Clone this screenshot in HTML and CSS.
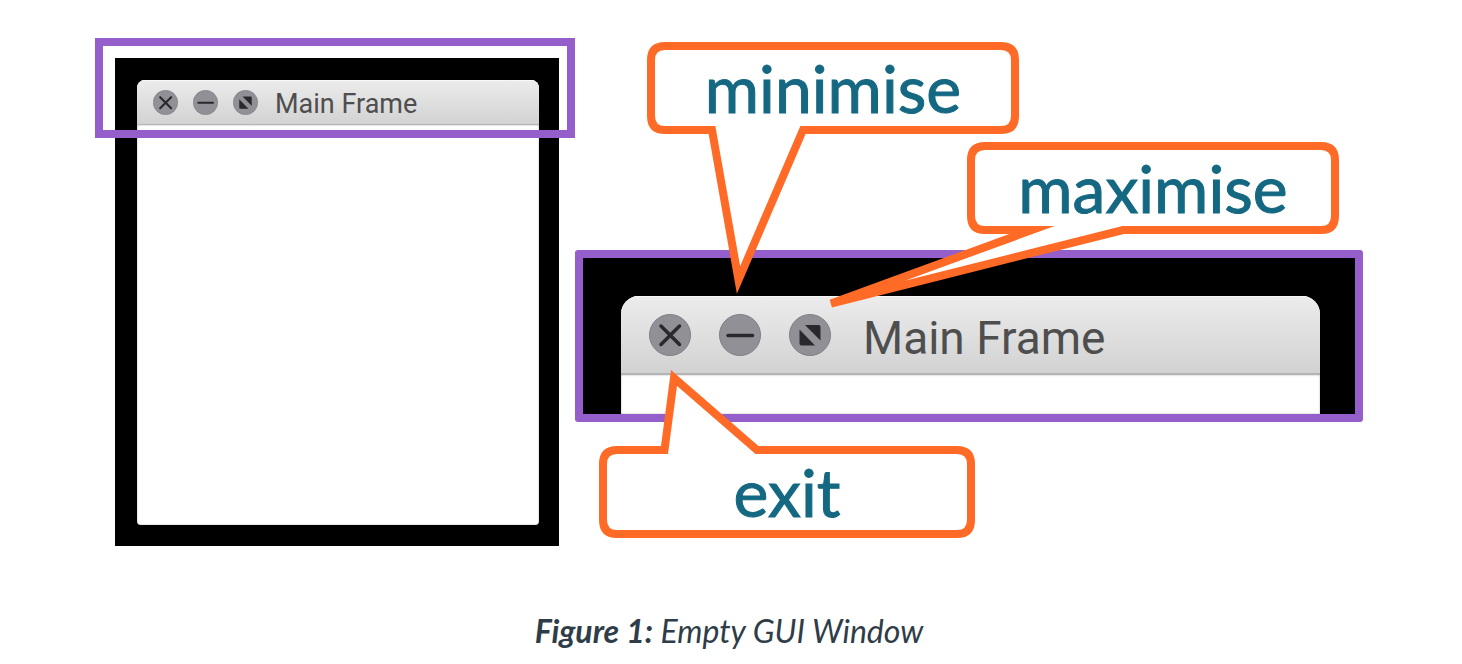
FILE: index.html
```html
<!DOCTYPE html>
<html lang="en">
<head>
<meta charset="utf-8">
<title>Empty GUI Window</title>
<link rel="stylesheet" href="styles.css">
</head>
<body>
<svg class="defs" aria-hidden="true">
  <symbol id="exit" viewBox="0 0 42 42"><circle cx="21" cy="21" r="20.5"/><path class="stroke" d="M12 12l18.500 18.500M30.500 12l-18.500 18.500"/></symbol>
  <symbol id="minimise" viewBox="0 0 42 42"><circle cx="21" cy="21" r="20.5"/><path class="stroke" d="M9 21.500h24.500"/></symbol>
  <symbol id="maximise" viewBox="0 0 42 42"><circle cx="21" cy="21" r="20.500"/><path class="solid" d="M16 11h13.500q2 0 2 2v13.500zM10.500 15.500L26 31.500H12.500q-2 0-2-2z"/></symbol>
</svg>
<figure class="figure">
  <div class="diagram">
    <section class="overview">
      <div class="desktop">
        <div class="window">
          <header class="titlebar">
            <button class="control" aria-label="Exit"><svg><use href="#exit"/></svg></button>
            <button class="control" aria-label="Minimise"><svg><use href="#minimise"/></svg></button>
            <button class="control" aria-label="Maximise"><svg><use href="#maximise"/></svg></button>
            <span class="title">Main Frame</span>
          </header>
          <div class="content"></div>
        </div>
      </div>
      <div class="highlight"></div>
    </section>
    <section class="detail">
      <div class="closeup">
        <div class="window large">
          <header class="titlebar">
            <button class="control" aria-label="Exit"><svg><use href="#exit"/></svg></button>
            <button class="control" aria-label="Minimise"><svg><use href="#minimise"/></svg></button>
            <button class="control" aria-label="Maximise"><svg><use href="#maximise"/></svg></button>
            <span class="title">Main Frame</span>
          </header>
          <div class="content"></div>
        </div>
      </div>
      <div class="callout callout-minimise">
        <svg class="bubble" aria-hidden="true"><path d="M18 4H354Q368 4 368 18V74Q368 88 354 88H156L91.500 238L65 88H18Q4 88 4 74V18Q4 4 18 4Z"/></svg>
        <span class="label">minimise</span>
      </div>
      <div class="callout callout-maximise">
        <svg class="bubble" aria-hidden="true"><path d="M18 4H354Q368 4 368 18V74Q368 88 354 88H156L-136 161.500L65 88H18Q4 88 4 74V18Q4 4 18 4Z"/></svg>
        <span class="label">maximise</span>
      </div>
      <div class="callout callout-exit">
        <svg class="bubble" aria-hidden="true"><path d="M18 4H65.500L75 -68L158 4H358Q372 4 372 18V74Q372 88 358 88H18Q4 88 4 74V18Q4 4 18 4Z"/></svg>
        <span class="label">exit</span>
      </div>
    </section>
  </div>
  <figcaption class="caption"><strong>Figure 1:</strong> Empty GUI Window</figcaption>
</figure>
</body>
</html>
```

FILE: styles.css
```css
body {
  margin: 0;
  background: #fff;
  font-family: Lato, sans-serif;
}

.defs {
  display: none;
}

.figure {
  margin: 0;
  padding: 38px 99px 12px 95px;
}

.diagram {
  display: grid;
  grid-template-columns: 480px 1fr;
}

.overview,
.detail {
  position: relative;
}

.overview {
  padding: 20px 16px 0 20px;
}

.desktop {
  padding: 22px 20px 21px 22px;
  background: #000;
}

.highlight {
  position: absolute;
  top: 0;
  left: 0;
  right: 0;
  height: 84px;
  border: 8px solid #945fca;
}

.window {
  overflow: hidden;
  border-radius: 8px 8px 4px 4px;
  background: #fff;
  font-family: Roboto, sans-serif;
}

.titlebar {
  display: flex;
  align-items: center;
  gap: 15px;
  box-sizing: border-box;
  height: 45px;
  padding: 0 16px;
  border-bottom: 1px solid #b4b4b4;
  background: linear-gradient(#ececec, #d2d2d2);
  box-shadow: inset 0 1px #f8f8f8;
}

.content {
  height: 400px;
  box-shadow: inset 0 0 2px #aaa;
}

.control {
  width: 25px;
  height: 25px;
  padding: 0;
  border: 0;
  background: none;
}

.control svg {
  display: block;
  width: 100%;
  height: 100%;
  fill: #919096;
  stroke: #807f85;
}

.stroke {
  fill: none;
  stroke: #29282d;
  stroke-width: 3.5;
  stroke-linecap: round;
}

.solid {
  fill: #29282d;
  stroke: none;
}

.title {
  padding: 4px 0 0 2px;
  color: #4e4e4e;
  font-size: 27px;
  line-height: 32px;
}

.detail {
  padding-top: 212px;
}

.closeup {
  padding: 38px 35px 0 38px;
  border: 8px solid #945fca;
  border-radius: 3px;
  background: #000;
}

.large {
  border-radius: 18px 18px 0 0;
}

.large .titlebar {
  gap: 28px;
  height: 79px;
  padding: 0 28px;
  border-bottom-width: 2px;
}

.large .control {
  width: 42px;
  height: 42px;
}

.large .title {
  padding: 6px 0 0 4px;
  font-size: 46px;
  line-height: 56px;
}

.large .content {
  height: 39px;
}

.callout {
  position: absolute;
  display: flex;
  align-items: center;
  justify-content: center;
  width: 372px;
  height: 92px;
}

.callout-minimise {
  top: 4px;
  left: 72px;
}

.callout-maximise {
  top: 104px;
  left: 392px;
}

.callout-exit {
  top: 408px;
  left: 24px;
  width: 376px;
}

.bubble {
  position: absolute;
  inset: 0;
  width: 100%;
  height: 100%;
  overflow: visible;
  fill: #fff;
  stroke: #ff6b26;
  stroke-width: 8;
  stroke-miterlimit: 8;
}

.label {
  position: relative;
  color: #156882;
  font-size: 66px;
  line-height: 80px;
  -webkit-text-stroke: 1px #156882;
}

.caption {
  margin-top: 65px;
  color: #2f3d48;
  font-size: 32px;
  font-style: italic;
  line-height: 40px;
  text-align: center;
}
```
